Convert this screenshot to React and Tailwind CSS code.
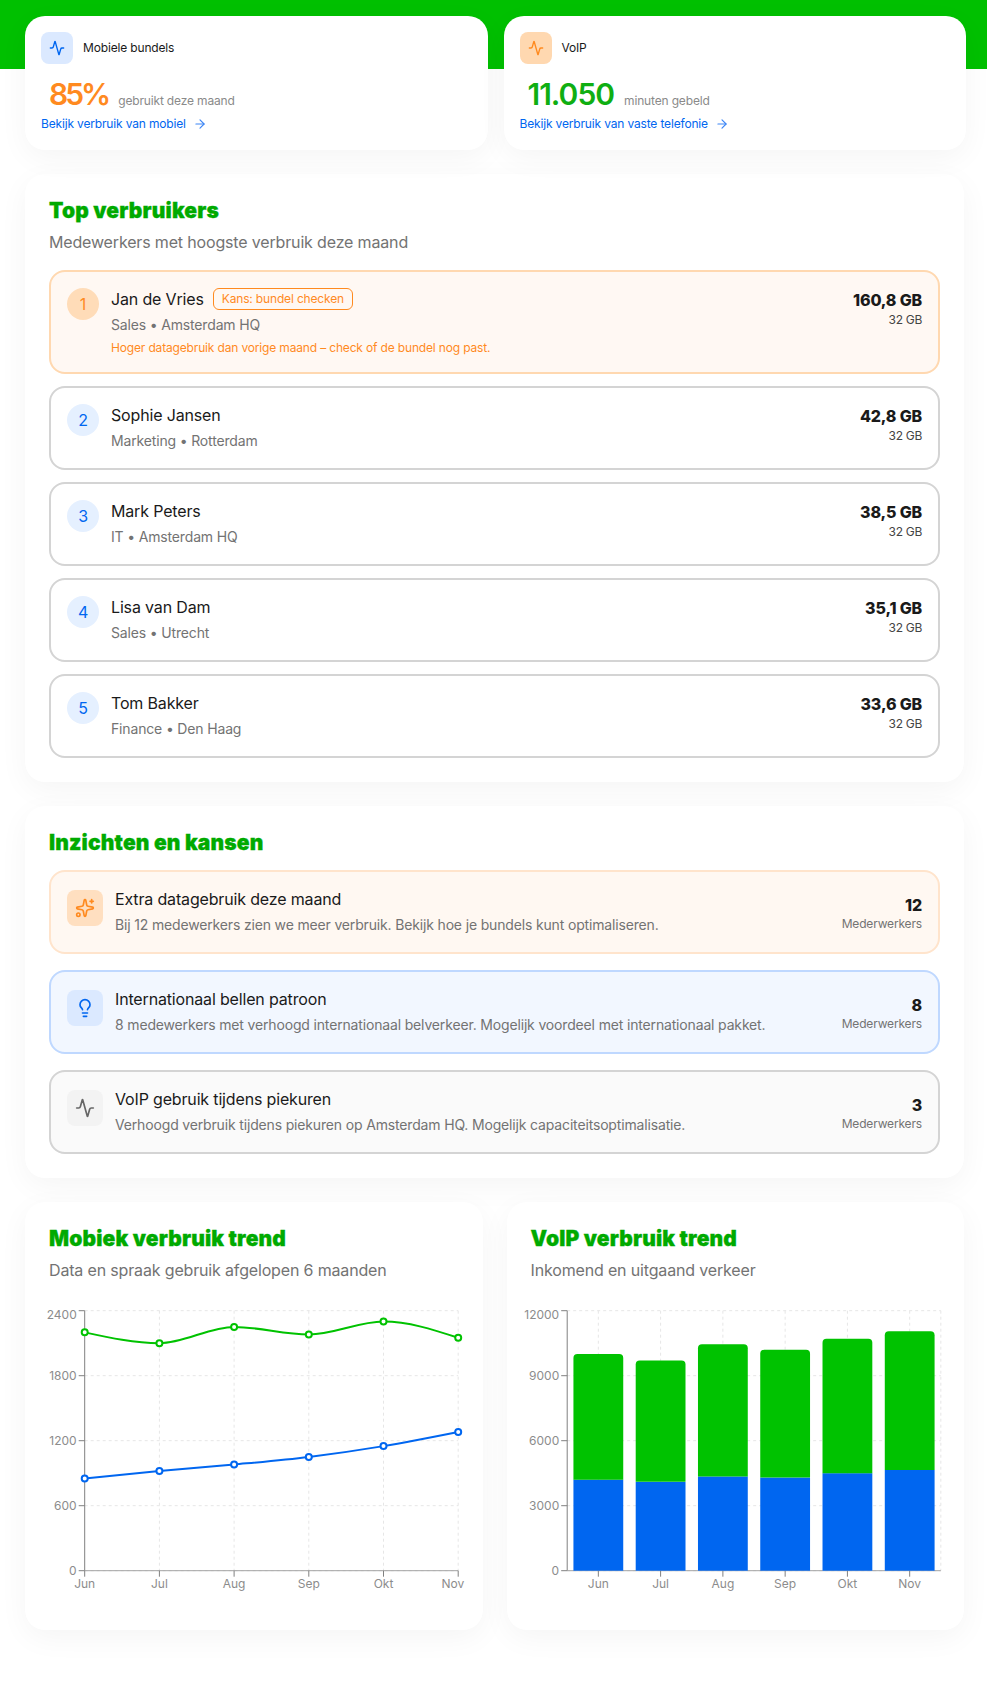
import React from 'react';
import { Activity, ArrowRight, Lightbulb, Sparkles } from 'lucide-react';

const GREEN = '#00c200';
const BLUE = '#0066f0';
const MONTHS = ['Jun', 'Jul', 'Aug', 'Sep', 'Okt', 'Nov'];

const users = [
  { name: 'Jan de Vries', sub: 'Sales • Amsterdam HQ', used: '160,8 GB', flagged: true },
  { name: 'Sophie Jansen', sub: 'Marketing • Rotterdam', used: '42,8 GB' },
  { name: 'Mark Peters', sub: 'IT • Amsterdam HQ', used: '38,5 GB' },
  { name: 'Lisa van Dam', sub: 'Sales • Utrecht', used: '35,1 GB' },
  { name: 'Tom Bakker', sub: 'Finance • Den Haag', used: '33,6 GB' },
];

const insights = [
  {
    title: 'Extra datagebruik deze maand',
    text: 'Bij 12 medewerkers zien we meer verbruik. Bekijk hoe je bundels kunt optimaliseren.',
    count: 12,
    Icon: Sparkles,
    row: 'bg-[#fff8f2] border-[#ffe4cc]',
    box: 'bg-[#ffdfc0] text-[#ff8a1f]',
  },
  {
    title: 'Internationaal bellen patroon',
    text: '8 medewerkers met verhoogd internationaal belverkeer. Mogelijk voordeel met internationaal pakket.',
    count: 8,
    Icon: Lightbulb,
    row: 'bg-[#f2f7ff] border-[#bfd8ff]',
    box: 'bg-[#dbe9ff] text-[#0066f0]',
  },
  {
    title: 'VoIP gebruik tijdens piekuren',
    text: 'Verhoogd verbruik tijdens piekuren op Amsterdam HQ. Mogelijk capaciteitsoptimalisatie.',
    count: 3,
    Icon: Activity,
    row: 'bg-[#fafafa] border-[#d4d4d4]',
    box: 'bg-[#f3f3f3] text-[#666666]',
  },
];

const cardClass = 'bg-white rounded-[20px] shadow-[0_8px_30px_rgba(0,0,0,0.045)]';

// d3 style monotoneX, same curve the original chart lib draws
function monotonePath(pts) {
  const n = pts.length;
  const dx = [];
  const m = [];
  for (let i = 0; i < n - 1; i++) {
    dx[i] = pts[i + 1][0] - pts[i][0];
    m[i] = (pts[i + 1][1] - pts[i][1]) / dx[i];
  }
  const t = [m[0]];
  for (let i = 1; i < n - 1; i++) {
    if (m[i - 1] * m[i] <= 0) t[i] = 0;
    else t[i] = (Math.sign(m[i - 1]) + Math.sign(m[i])) * Math.min(Math.abs(m[i - 1]), Math.abs(m[i]), 0.25 * Math.abs(m[i - 1] + m[i]));
  }
  t[0] = (3 * m[0] - t[1]) / 2;
  t[n - 1] = (3 * m[n - 2] - t[n - 2]) / 2;
  let d = `M${pts[0][0]},${pts[0][1]}`;
  for (let i = 0; i < n - 1; i++) {
    const h = dx[i] / 3;
    d += `C${pts[i][0] + h},${pts[i][1] + t[i] * h} ${pts[i + 1][0] - h},${pts[i + 1][1] - t[i + 1] * h} ${pts[i + 1][0]},${pts[i + 1][1]}`;
  }
  return d;
}

const TOP = 4.7;
const BOTTOM = 264.7;

function Axes({ left, right, yTicks, max, xs, gridXs }) {
  const yOf = (v) => BOTTOM - (v / max) * (BOTTOM - TOP);
  return (
    <>
      {yTicks.map((v) => (
        <line key={v} x1={left} x2={right} y1={yOf(v)} y2={yOf(v)} stroke="#e6e6e6" strokeDasharray="3 3" />
      ))}
      {gridXs.map((x) => (
        <line key={x} x1={x} x2={x} y1={TOP} y2={BOTTOM} stroke="#e6e6e6" strokeDasharray="3 3" />
      ))}
      <line x1={left} x2={left} y1={TOP} y2={BOTTOM} stroke="#808080" />
      <line x1={left} x2={right} y1={BOTTOM} y2={BOTTOM} stroke="#a3a3a3" />
      {yTicks.map((v) => (
        <g key={v}>
          <line x1={left - 6} x2={left} y1={yOf(v)} y2={yOf(v)} stroke="#808080" />
          <text x={left - 8} y={(v === max ? yOf(v) + 4.5 : yOf(v)) + 4} textAnchor="end" className="fill-[#8c8c8c] text-xs">
            {v}
          </text>
        </g>
      ))}
      {xs.map((x, i) => (
        <g key={x}>
          <line x1={x} x2={x} y1={BOTTOM} y2={BOTTOM + 6} stroke="#808080" />
          <text x={i === 5 && right === x ? x + 6 : x} y={BOTTOM + 17} textAnchor={i === 5 && right === x ? 'end' : 'middle'} className="fill-[#8c8c8c] text-xs">
            {MONTHS[i]}
          </text>
        </g>
      ))}
    </>
  );
}

function LineChart() {
  const left = 35.7;
  const step = 74.7;
  const xs = MONTHS.map((_, i) => left + i * step);
  const right = xs[5];
  const yOf = (v) => BOTTOM - (v / 2400) * (BOTTOM - TOP);
  const series = [
    { color: GREEN, values: [2200, 2100, 2250, 2180, 2300, 2150] },
    { color: BLUE, values: [850, 920, 980, 1050, 1150, 1280] },
  ];
  return (
    <svg width="410" height="300" className="block overflow-visible tracking-normal">
      <Axes left={left} right={right} yTicks={[0, 600, 1200, 1800, 2400]} max={2400} xs={xs} gridXs={xs.slice(1)} />
      {series.map((s) => {
        const pts = s.values.map((v, i) => [xs[i], yOf(v)]);
        return (
          <g key={s.color}>
            <path d={monotonePath(pts)} fill="none" stroke={s.color} strokeWidth="2" />
            {pts.map(([x, y]) => (
              <circle key={x} cx={x} cy={y} r="3" fill="#ffffff" stroke={s.color} strokeWidth="2" />
            ))}
          </g>
        );
      })}
    </svg>
  );
}

function BarChart() {
  const left = 36.2;
  const band = 62.27;
  const right = left + band * 6;
  const xs = MONTHS.map((_, i) => left + band * (i + 0.5));
  const scale = (BOTTOM - TOP) / 12000;
  const blue = [4200, 4100, 4350, 4300, 4500, 4650];
  const total = [10000, 9700, 10450, 10200, 10700, 11050];
  const barW = 49.8;
  return (
    <svg width="411" height="300" className="block overflow-visible tracking-normal">
      <Axes left={left} right={right} yTicks={[0, 3000, 6000, 9000, 12000]} max={12000} xs={xs} gridXs={[...xs, right]} />
      {xs.map((x, i) => {
        const blueTop = BOTTOM - blue[i] * scale;
        const greenTop = BOTTOM - total[i] * scale;
        const l = x - barW / 2;
        const r = x + barW / 2;
        return (
          <g key={x}>
            <rect x={l} y={blueTop} width={barW} height={blue[i] * scale} fill={BLUE} />
            <path d={`M${l},${blueTop}V${greenTop + 4}Q${l},${greenTop} ${l + 4},${greenTop}H${r - 4}Q${r},${greenTop} ${r},${greenTop + 4}V${blueTop}Z`} fill={GREEN} />
          </g>
        );
      })}
    </svg>
  );
}

function StatCard({ label, iconBox, value, valueColor, caption, link, valueTrack }) {
  return (
    <div className={`${cardClass} p-4 h-[134px]`}>
      <div className="flex items-center gap-[10px]">
        <div className={`w-8 h-8 rounded-lg flex items-center justify-center ${iconBox}`}>
          <Activity size={16} />
        </div>
        <span className="text-xs text-[#1a1a1a]">{label}</span>
      </div>
      <div className="mt-3 ml-2 flex items-baseline gap-[10px] h-9">
        <span className={`text-[30px] leading-9 font-semibold ${valueTrack} ${valueColor}`}>{value}</span>
        <span className="text-xs text-[#8a8a8a]">{caption}</span>
      </div>
      <a className="mt-1 flex items-center gap-[7px] text-xs leading-4 text-[#0066f0]">
        {link}
        <ArrowRight size={14} className="text-[#3d86f5]" />
      </a>
    </div>
  );
}

function SectionTitle({ children }) {
  return (
    <h2 className="-mt-px pb-px font-black text-[21px] leading-7 tracking-[0.15px] text-[#00aa00] [-webkit-text-stroke:0.3px_#00aa00]">
      {children}
    </h2>
  );
}

export default function App() {
  return (
    <div className="relative min-h-[1687px] bg-white font-['Inter',sans-serif] tracking-[-0.01em]">
      <div className="absolute inset-x-0 top-0 h-[69px] bg-[#00c000]" />
      <div className="relative pl-[25px] pr-[23px] pt-4 pb-[57px]">
        <div className="grid grid-cols-2 gap-4 w-[941px]">
          <StatCard
            label="Mobiele bundels"
            iconBox="bg-[#dbe9ff] text-[#0066f0]"
            value="85%"
            valueTrack="tracking-[-3px]"
            valueColor="text-[#ff8a1f]"
            caption="gebruikt deze maand"
            link="Bekijk verbruik van mobiel"
          />
          <StatCard
            label="VoIP"
            iconBox="bg-[#ffd8b0] text-[#ff8a1f]"
            value="11.050"
            valueTrack="tracking-[-1px]"
            valueColor="text-[#0fae12]"
            caption="minuten gebeld"
            link="Bekijk verbruik van vaste telefonie"
          />
        </div>

        {/* Top verbruikers */}
        <section className={`${cardClass} mt-6 p-6`}>
          <SectionTitle>Top verbruikers</SectionTitle>
          <p className="mt-1 text-base leading-6 text-[#737373]">Medewerkers met hoogste verbruik deze maand</p>
          <div className="mt-4 flex flex-col gap-3">
            {users.map((u, i) => (
              <div
                key={u.name}
                className={`flex justify-between rounded-2xl border-2 p-4 ${u.flagged ? 'h-[104px] bg-[#fff8f3] border-[#ffd8b0]' : 'h-[84px] bg-white border-[#d4d4d4]'}`}
              >
                <div className="flex gap-3">
                  <div className={`w-8 h-8 rounded-full flex items-center justify-center text-base ${u.flagged ? 'bg-[#ffdcb8] text-[#ff8a1f]' : 'bg-[#e5f0ff] text-[#0066f0]'}`}>
                    {i + 1}
                  </div>
                  <div>
                    <div className="flex items-center gap-[9px] h-[22px]">
                      <span className="text-base leading-6 text-[#1a1a1a]">{u.name}</span>
                      {u.flagged && (
                        <span className="h-[22px] px-[8px] flex items-center rounded-md border border-[#ff8a1f] text-xs text-[#ff8a1f]">Kans: bundel checken</span>
                      )}
                    </div>
                    <div className="mt-[5px] text-sm leading-5 text-[#737373]">{u.sub}</div>
                    {u.flagged && <div className="mt-[5px] text-xs leading-4 text-[#ff8a1f]">Hoger datagebruik dan vorige maand – check of de bundel nog past.</div>}
                  </div>
                </div>
                <div className="text-right pt-[2px]">
                  <div className="text-base leading-5 font-extrabold text-[#1a1a1a]">{u.used}</div>
                  <div className="text-xs leading-5 tracking-[-0.3px] text-[#444444]">32 GB</div>
                </div>
              </div>
            ))}
          </div>
        </section>

        {/* Inzichten */}
        <section className={`${cardClass} mt-6 p-6`}>
          <SectionTitle>Inzichten en kansen</SectionTitle>
          <div className="mt-3 flex flex-col gap-4">
            {insights.map(({ title, text, count, Icon, row, box }) => (
              <div key={title} className={`h-[84px] flex justify-between rounded-2xl border-2 p-4 ${row}`}>
                <div className="flex gap-3">
                  <div className={`mt-[2px] w-9 h-9 rounded-lg flex items-center justify-center ${box}`}>
                    <Icon size={20} />
                  </div>
                  <div>
                    <div className="text-base leading-[22px] text-[#1a1a1a]">{title}</div>
                    <div className="mt-[5px] text-sm leading-5 text-[#737373]">{text}</div>
                  </div>
                </div>
                <div className="text-right pt-[5px]">
                  <div className="text-base leading-6 font-extrabold text-[#1a1a1a]">{count}</div>
                  <div className="-mt-[3px] text-xs leading-5 text-[#737373]">Mederwerkers</div>
                </div>
              </div>
            ))}
          </div>
        </section>

        {/* Trends */}
        <div className="mt-6 grid grid-cols-2 gap-6">
          <section className={`${cardClass} p-6`}>
            <SectionTitle>Mobiek verbruik trend</SectionTitle>
            <p className="mt-1 mb-6 text-base leading-6 text-[#737373]">Data en spraak gebruik afgelopen 6 maanden</p>
            <LineChart />
          </section>
          <section className={`${cardClass} p-6`}>
            <SectionTitle>VoIP verbruik trend</SectionTitle>
            <p className="mt-1 mb-6 text-base leading-6 text-[#737373]">Inkomend en uitgaand verkeer</p>
            <BarChart />
          </section>
        </div>
      </div>
    </div>
  );
}
